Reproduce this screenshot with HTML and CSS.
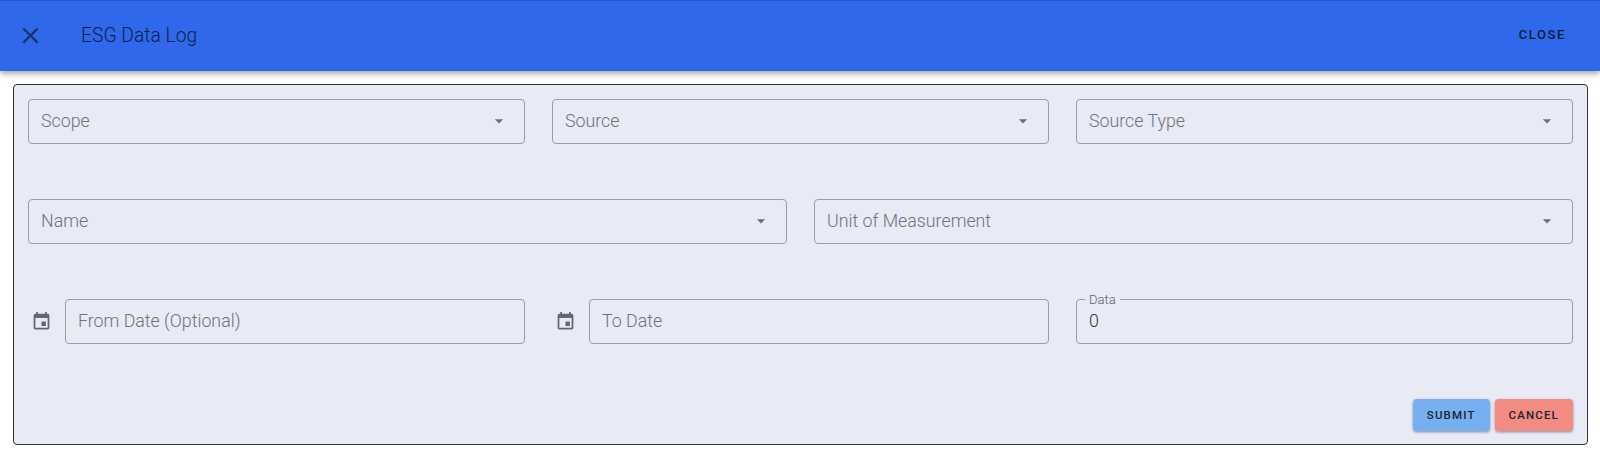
FILE: index.html
```html
<!DOCTYPE html>
<html lang="en">
<head>
<meta charset="utf-8">
<title>ESG Data Log</title>
<link rel="stylesheet" href="styles.css">
</head>
<body>
<header class="appbar">
  <svg class="close-icon" viewBox="0 0 24 24" width="27" height="27"><path d="M19 6.41 17.59 5 12 10.59 6.41 5 5 6.41 10.59 12 5 17.59 6.41 19 12 13.41 17.59 19 19 17.59 13.41 12z"/></svg>
  <h1 class="title">ESG Data Log</h1>
  <span class="close-btn">CLOSE</span>
</header>
<main class="card">
  <div class="row row-3">
    <div class="field"><span class="placeholder">Scope</span><svg class="caret" viewBox="0 0 24 24" width="20" height="20"><path d="M7 10l5 5 5-5z"/></svg></div>
    <div class="field"><span class="placeholder">Source</span><svg class="caret" viewBox="0 0 24 24" width="20" height="20"><path d="M7 10l5 5 5-5z"/></svg></div>
    <div class="field"><span class="placeholder">Source Type</span><svg class="caret" viewBox="0 0 24 24" width="20" height="20"><path d="M7 10l5 5 5-5z"/></svg></div>
  </div>
  <div class="row row-2">
    <div class="field"><span class="placeholder">Name</span><svg class="caret" viewBox="0 0 24 24" width="20" height="20"><path d="M7 10l5 5 5-5z"/></svg></div>
    <div class="field"><span class="placeholder">Unit of Measurement</span><svg class="caret" viewBox="0 0 24 24" width="20" height="20"><path d="M7 10l5 5 5-5z"/></svg></div>
  </div>
  <div class="row row-3">
    <div class="date-group">
      <svg class="cal" viewBox="0 0 24 24" width="21" height="21"><path d="M17 12h-5v5h5v-5zM16 1v2H8V1H6v2H5c-1.11 0-1.99.9-1.99 2L3 19c0 1.1.89 2 2 2h14c1.1 0 2-.9 2-2V5c0-1.1-.9-2-2-2h-1V1h-2zm3 18H5V8h14v11z"/></svg>
      <div class="field"><span class="placeholder">From Date (Optional)</span></div>
    </div>
    <div class="date-group">
      <svg class="cal" viewBox="0 0 24 24" width="21" height="21"><path d="M17 12h-5v5h5v-5zM16 1v2H8V1H6v2H5c-1.11 0-1.99.9-1.99 2L3 19c0 1.1.89 2 2 2h14c1.1 0 2-.9 2-2V5c0-1.1-.9-2-2-2h-1V1h-2zm3 18H5V8h14v11z"/></svg>
      <div class="field"><span class="placeholder">To Date</span></div>
    </div>
    <div class="field"><span class="float-label">Data</span><span class="value">0</span></div>
  </div>
  <div class="actions">
    <button class="btn submit" type="button">SUBMIT</button>
    <button class="btn cancel" type="button">CANCEL</button>
  </div>
</main>
</body>
</html>
```

FILE: styles.css
```css
* { box-sizing: border-box; }
html, body { margin: 0; padding: 0; }
body {
  width: 1600px;
  height: 466px;
  overflow: hidden;
  background: #fff;
  font-family: Roboto, sans-serif;
  color: #1a2340;
}
.appbar {
  height: 71px;
  display: flex;
  align-items: center;
  padding: 0 24px 1px 17px;
  background: #2f68eb;
  border-top: 1px solid #2257d2;
  box-shadow: 0 2px 4px -1px rgba(0,0,0,.2), 0 4px 5px rgba(0,0,0,.14), 0 1px 10px rgba(0,0,0,.12);
}
.close-icon { fill: #1d3166; flex: none; }
.title {
  margin: 1px 0 0 37px;
  font-size: 19.3px;
  font-weight: 300;
  line-height: 28px;
  color: #0f1f48;
  flex: 1;
}
.close-btn {
  font-size: 13px;
  font-weight: 500;
  letter-spacing: 1.6px;
  color: #0f1c3d;
  margin: 0 10px 2px 0;
}
.card {
  margin: 13px 12px 0 13px;
  height: 361px;
  padding: 14px 14px 12px 14px;
  background: #e8eaf6;
  border: 1px solid #333;
  border-radius: 4px;
  display: flex;
  flex-direction: column;
  gap: 55.5px;
}
.row {
  display: grid;
  column-gap: 27px;
  height: 44.5px;
  flex: none;
}
.row-3 { grid-template-columns: repeat(3, minmax(0, 1fr)); }
.row-2 { grid-template-columns: repeat(2, minmax(0, 1fr)); }
.field {
  position: relative;
  height: 44.5px;
  display: flex;
  align-items: center;
  justify-content: space-between;
  padding: 0 15px 1px 12px;
  border: 1px solid #9a9ca8;
  border-radius: 4px;
  font-size: 17.8px;
}
.placeholder { color: #6f717e; font-weight: 300; }
.value { color: #33353f; font-weight: 300; }
.caret { fill: #6e6e76; flex: none; }
.float-label {
  position: absolute;
  top: -7px;
  left: 8px;
  padding: 0 4px;
  font-size: 13px;
  font-weight: 300;
  line-height: 14px;
  color: #5e606b;
  background: #e8eaf6;
}
.date-group { display: flex; align-items: center; gap: 13px; padding-left: 3px; }
.date-group .field { flex: 1; }
.cal { fill: #66666e; flex: none; }
.actions {
  display: flex;
  justify-content: flex-end;
  gap: 5px;
  margin-top: 0;
}
.btn {
  height: 32px;
  padding: 0 14px;
  border: 0;
  border-radius: 4px;
  font-family: Roboto, sans-serif;
  font-size: 11.5px;
  font-weight: 500;
  letter-spacing: 1.15px;
  color: #1b2333;
  box-shadow: 0 1px 3px rgba(0,0,0,.3), 0 2px 2px rgba(0,0,0,.1);
}
.submit { background: #76b0f1; }
.cancel { background: #f28b82; }
```
